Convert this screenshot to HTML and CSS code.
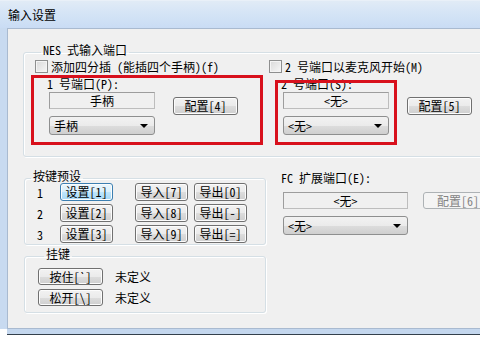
FILE: index.html
```html
<!DOCTYPE html>
<html lang="zh-CN">
<head>
    <meta charset="UTF-8">
    <title>输入设置</title>
    <link rel="stylesheet" href="styles.css">
</head>
<body>

    <div class="window">
        <div class="titlebar">输入设置</div>

        <div class="client">

            <fieldset class="group nes">
                <legend>NES 式输入端口</legend>

                <div class="cols">
                    <div class="col">
                        <label class="check"><span class="box"></span>添加四分插 (能插四个手柄)(f)</label>
                        <div class="port">
                            <div class="port-label">1 号端口(P):</div>
                            <div class="port-body">
                                <div class="stack">
                                    <div class="static">手柄</div>
                                    <div class="combo">手柄<span class="arrow"></span></div>
                                </div>
                                <button class="btn cfg">配置[4]</button>
                            </div>
                        </div>
                    </div>

                    <div class="col">
                        <label class="check"><span class="box"></span>2 号端口以麦克风开始(M)</label>
                        <div class="port">
                            <div class="port-label">2 号端口(S):</div>
                            <div class="port-body">
                                <div class="stack">
                                    <div class="static">&lt;无&gt;</div>
                                    <div class="combo">&lt;无&gt;<span class="arrow"></span></div>
                                </div>
                                <button class="btn cfg">配置[5]</button>
                            </div>
                        </div>
                    </div>
                </div>
            </fieldset>

            <div class="lower">
                <div class="left">
                    <fieldset class="group presets">
                        <legend>按键预设</legend>
                        <div class="preset-row">
                            <span class="num">1</span>
                            <button class="btn set focus">设置[1]</button>
                            <button class="btn imp">导入[7]</button>
                            <button class="btn exp">导出[0]</button>
                        </div>
                        <div class="preset-row">
                            <span class="num">2</span>
                            <button class="btn set">设置[2]</button>
                            <button class="btn imp">导入[8]</button>
                            <button class="btn exp">导出[-]</button>
                        </div>
                        <div class="preset-row">
                            <span class="num">3</span>
                            <button class="btn set">设置[3]</button>
                            <button class="btn imp">导入[9]</button>
                            <button class="btn exp">导出[=]</button>
                        </div>
                    </fieldset>

                    <fieldset class="group hold">
                        <legend>挂键</legend>
                        <div class="hold-row">
                            <button class="btn hk">按住[`]</button>
                            <span>未定义</span>
                        </div>
                        <div class="hold-row">
                            <button class="btn hk">松开[\]</button>
                            <span>未定义</span>
                        </div>
                    </fieldset>
                </div>

                <div class="fc">
                    <div class="port-label">FC 扩展端口(E):</div>
                    <div class="fc-body">
                        <div class="stack">
                            <div class="static wide">&lt;无&gt;</div>
                            <div class="combo wide">&lt;无&gt;<span class="arrow"></span></div>
                        </div>
                        <button class="btn cfg6" disabled>配置[6]</button>
                    </div>
                </div>
            </div>

        </div>

        <!-- 红框标注 -->
        <div class="mark mark1"></div>
        <div class="mark mark2"></div>
    </div>

</body>
</html>
```

FILE: styles.css
```css
body {
    margin: 0;
    background: #fff;
    font-family: "Noto Sans Mono CJK SC", "Noto Sans CJK SC", sans-serif;
    font-size: 12px;
    color: #000;
}

.window {
    position: relative;
    width: 480px;
    height: 337px;
    overflow: hidden;
    background: #fff;
}

.titlebar {
    height: 28px;
    line-height: 28px;
    padding-left: 8px;
    font-size: 12px;
    background: linear-gradient(to bottom, #e1ebf6 0%, #d6e5f6 40%, #c9dcf4 100%);
    border-top: 1px solid #e9f0f8;
    box-sizing: border-box;
}

.client {
    height: 301px;
    margin-left: 7px;
    background: #f0f0f0;
    border-top: 1px solid #a9bad0;
    border-left: 1px solid #a9bad0;
    border-bottom: 1px solid #a9bad0;
    box-sizing: border-box;
    box-shadow: -7px 0 0 #c8daf0, 0 5px 0 #c4d7ee, 0 6px 0 #34404c;
}

/* group boxes */
.group {
    margin: 0;
    padding: 0;
    min-width: 0;
    border: 1px solid #d5dfe5;
    border-radius: 3px;
    box-shadow: inset 1px 1px #fff, 1px 1px #fff;
}
.group legend {
    margin-left: 6px;
    padding: 0 2px 4px;
    line-height: 12px;
}

.nes {
    margin: 15px 0 0 15px;
    width: 520px;
    height: 113px;
    box-sizing: border-box;
    padding: 0 0 0 11px;
}

.cols {
    display: flex;
}
.col {
    width: 234px;
}

.check {
    display: flex;
    align-items: center;
    height: 13px;
    line-height: 13px;
    gap: 3px;
}
.box {
    width: 11px;
    height: 11px;
    border: 1px solid #8e8f8f;
    background: linear-gradient(135deg, #d9d9d9, #f7f7f7);
    box-shadow: inset 0 0 0 1px #f4f4f4;
}

.port {
    padding: 4px 0 0 14px;
}
.port-label {
    margin-left: -2px;
    line-height: 14px;
}
.port-body {
    display: flex;
    margin-top: 1px;
}
.stack {
    display: flex;
    flex-direction: column;
    gap: 7px;
}

.static {
    width: 106px;
    height: 17px;
    line-height: 15px;
    box-sizing: border-box;
    border: 1px solid #9d9d9d;
    border-right-color: #bdbdbd;
    border-bottom-color: #bdbdbd;
    background: #f0f0f0;
    text-align: center;
}
.static.wide {
    width: 125px;
}

.combo {
    position: relative;
    width: 106px;
    height: 19px;
    line-height: 17px;
    box-sizing: border-box;
    padding-left: 4px;
    border: 1px solid #8e8f8f;
    border-radius: 3px;
    background: linear-gradient(to bottom, #f2f2f2 0%, #ebebeb 50%, #dddddd 51%, #cfcfcf 100%);
}
.combo.wide {
    width: 125px;
}
.arrow {
    position: absolute;
    right: 6px;
    top: 7px;
    border-left: 4px solid transparent;
    border-right: 4px solid transparent;
    border-top: 4px solid #000;
}

/* buttons */
.btn {
    font: inherit;
    color: #000;
    height: 18px;
    padding: 0;
    line-height: 16px;
    box-sizing: border-box;
    border: 1px solid #707070;
    border-radius: 3px;
    background: linear-gradient(to bottom, #f2f2f2 0%, #ebebeb 50%, #dddddd 51%, #cfcfcf 100%);
    box-shadow: inset 0 0 0 1px #fcfcfc;
}
.btn.focus {
    border-color: #3c7fb1;
    background: linear-gradient(to bottom, #eaf6fd 0%, #d9f0fc 50%, #bee6fd 51%, #a7d9f5 100%);
}
.btn:disabled {
    color: #838383;
    border-color: #adb2b5;
    background: #f4f4f4;
    box-shadow: none;
}

.cfg {
    width: 65px;
    margin: 5px 0 0 18px;
}

/* lower part */
.lower {
    display: flex;
    margin-top: 13px;
}
.left {
    flex-shrink: 0;
    margin-left: 16px;
    width: 242px;
}

.presets {
    padding: 0 0 1px 0;
}
.preset-row {
    display: flex;
    align-items: center;
    height: 18px;
    margin-top: 3px;
}
.preset-row:first-of-type {
    margin-top: -3px;
}
.num {
    width: 35px;
    padding-left: 12px;
    box-sizing: border-box;
}
.set, .imp, .exp {
    width: 53px;
}
.imp {
    margin-left: 22px;
}
.exp {
    margin-left: 6px;
}

.hold {
    margin-top: 3px;
    padding: 4px 0 6px 13px;
}
.hold-row {
    display: flex;
    align-items: center;
    gap: 12px;
    height: 17px;
    margin-top: 4px;
}
.hold-row:first-of-type {
    margin-top: 0;
}
.hk {
    width: 65px;
    height: 17px;
}

.fc {
    flex-shrink: 0;
    margin: 1px 0 0 17px;
}
.fc-body {
    display: flex;
    margin-top: 7px;
}
.cfg6 {
    width: 70px;
    height: 17px;
    margin-left: 15px;
}

/* red annotation boxes */
.mark {
    position: absolute;
    border: 3px solid #d8101c;
}
.mark1 {
    left: 31px;
    top: 75px;
    width: 226px;
    height: 64px;
}
.mark2 {
    left: 275px;
    top: 80px;
    width: 116px;
    height: 59px;
}
```
